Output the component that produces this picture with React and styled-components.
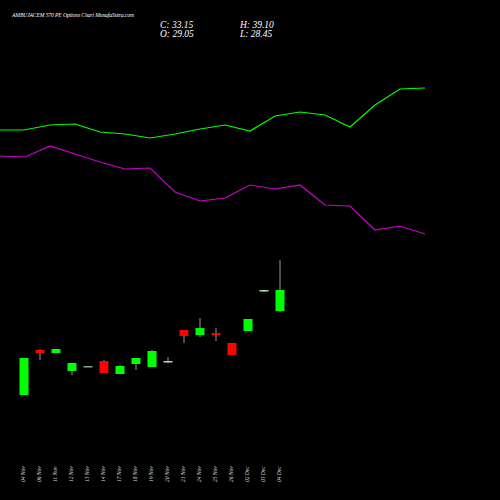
import React from 'react';
import styled, { createGlobalStyle } from 'styled-components';

const Global = createGlobalStyle`
  html, body { margin: 0; background: #000; }
  body { width: 500px; height: 500px; overflow: hidden; font-family: "Liberation Serif", serif; }
`;

const Page = styled.div`
  width: 500px;
  height: 500px;
  background: #000;
  color: #fff;
  font-style: italic;
  display: flex;
  flex-direction: column;
`;

const Header = styled.div`
  display: flex;
  padding: 11px 0 0 12px;
`;

const Title = styled.div`
  font-size: 5.6px;
  line-height: 8px;
  letter-spacing: -0.1px;
`;

const Quote = styled.div`
  display: grid;
  grid-template-columns: 80px 80px;
  margin-left: ${p => p.$offset}px;
  margin-top: 2px;
  font-size: 9.5px;
  line-height: 9px;
`;

const Chart = styled.svg`
  display: block;
  position: absolute;
  top: 0;
  left: 0;
`;

const green = '#00ff00';
const red = '#ff0000';
const days = ['04 Nov','06 Nov','11 Nov','12 Nov','13 Nov','14 Nov','17 Nov','18 Nov','19 Nov','20 Nov','21 Nov','24 Nov','25 Nov','26 Nov','02 Dec','03 Dec','04 Dec'];
// [top, bottom, wickTop, wickBottom, color]
const candles = [
  [358, 395, 358, 395, green],
  [350, 353, 349, 360, red],
  [349, 353, 349, 353, green],
  [363, 371, 363, 375, green],
  [366, 367, 366, 367, '#88aa88'],
  [361, 373, 360, 373, red],
  [366, 374, 365, 374, green],
  [358, 364, 358, 370, green],
  [351, 367, 350, 367, green],
  [361, 362, 357, 363, '#aaddaa'],
  [330, 336, 330, 343, red],
  [328, 335, 318, 337, green],
  [333, 335, 328, 341, red],
  [343, 355, 343, 355, red],
  [319, 331, 319, 331, green],
  [290, 291, 290, 292, '#aaddaa'],
  [290, 311, 260, 312, green],
];
const gLine = [[0,130],[24,130],[50,125],[75,124],[100,132],[125,134],[150,138],[175,134],[200,129],[225,125],[250,131],[275,116],[300,112],[325,115],[350,127],[375,105],[400,89],[425,88]];
const mLine = [[0,156],[25,157],[50,146],[75,154],[100,162],[125,169],[150,168],[175,192],[200,201],[225,198],[250,185],[275,189],[300,185],[325,205],[350,206],[375,230],[400,226],[425,234]];
const pts = l => l.map(p => p.join(',')).join(' ');

export default function App() {
  return (
    <Page>
      <Global />
      <Header>
        <Title>AMBUJACEM 570 PE Options Chart MunafaSutra.com</Title>
      </Header>
      <Quote $offset={160}>
        <span>C: 33.15</span><span>H: 39.10</span>
        <span>O: 29.05</span><span>L: 28.45</span>
      </Quote>
      <Chart width="500" height="500">
        <polyline points={pts(gLine)} fill="none" stroke={green} strokeWidth="1.2" />
        <polyline points={pts(mLine)} fill="none" stroke="#cc00cc" strokeWidth="1.2" />
        {candles.map(([t, b, wt, wb, c], i) => {
          const x = 24 + i * 16;
          return (
            <g key={i}>
              <line x1={x} x2={x} y1={wt} y2={wb} stroke="#999" strokeWidth="1" />
              <rect x={x - 4.5} y={t} width="9" height={Math.max(b - t, 1.5)} fill={c} />
            </g>
          );
        })}
        {days.map((d, i) => (
          <text key={d} transform={`translate(${25 + i * 16},482) rotate(-90)`} fill="#ddd"
            fontSize="5.5" fontStyle="italic" fontFamily="Liberation Serif, serif">{d}</text>
        ))}
      </Chart>
    </Page>
  );
}
